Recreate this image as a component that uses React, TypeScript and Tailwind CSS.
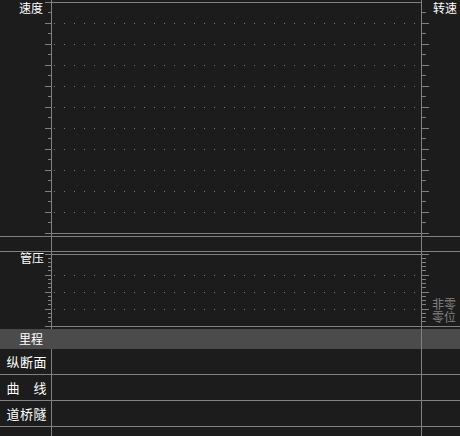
import React from "react";

const LINE = "#808080";
const DOT = "#787878";

// x positions of the grid dots, shared by both panels
const dotXs = Array.from({ length: 37 }, (_, i) => 54 + i * 10);

const ChartGrid = () => {
  const rects: React.ReactNode[] = [];
  const r = (x: number, y: number, w: number, h: number, fill = LINE) =>
    rects.push(<rect key={rects.length} x={x} y={y} width={w} height={h} fill={fill} />);

  // axes
  r(51, 0, 1, 329);
  r(51, 349, 1, 87);
  r(421, 0, 1, 436);

  // speed panel
  r(45, 2, 377, 1);
  r(45, 233, 384, 1);
  for (let k = 0; k < 11; k++) {
    const y = 12 + k * 21;
    r(48, y, 4, 1);
    r(421, y, 5, 1);
  }
  for (let k = 0; k < 10; k++) {
    const y = 23 + k * 21;
    r(45, y, 7, 1);
    r(421, y, 8, 1);
    dotXs.forEach((x) => r(x, y, 1, 1, DOT));
  }

  // separators
  r(0, 236, 460, 1);
  r(0, 251, 460, 1);

  // pipe pressure panel
  r(45, 254, 384, 1);
  for (let j = 0; j < 4; j++) {
    const base = 258 + j * 17;
    if (j > 0) {
      r(45, base, 7, 1);
      r(421, base, 8, 1);
      dotXs.forEach((x) => r(x, base, 1, 1, DOT));
    } else {
      r(48, base, 4, 1);
      r(421, base, 5, 1);
    }
    [4, 8, 12].forEach((o) => {
      r(48, base + o, 4, 1);
      r(421, base + o, 5, 1);
    });
  }
  r(45, 326, 415, 1);

  return (
    <svg
      className="absolute inset-0 pointer-events-none"
      width={460}
      height={436}
      shapeRendering="crispEdges"
    >
      {rects}
    </svg>
  );
};

const rows = ["纵断面", "曲　线", "道桥隧"];

export default function App() {
  return (
    <div className="relative w-[460px] h-[436px] overflow-hidden bg-[#1c1c1c] text-white font-['Noto_Sans_CJK_SC','Liberation_Sans',sans-serif]">
      <div className="flex flex-col">
        {/* speed panel */}
        <div className="grid grid-cols-[51px_1fr_39px] h-[236px]">
          <span className="text-right pr-[8px] pt-[2px] text-[12px] leading-[12px]">速度</span>
          <div />
          <span className="pl-[12px] pt-[2px] text-[12px] leading-[12px]">转速</span>
        </div>

        <div className="h-[15px]" />

        {/* pipe pressure panel */}
        <div className="grid grid-cols-[51px_1fr_39px] h-[75px]">
          <span className="text-right pr-[7px] pt-[1px] text-[12px] leading-[12px]">管压</span>
          <div />
          <div className="flex flex-col justify-end pl-[11px] pb-[3px]">
            <span className="w-[25px] break-all text-[12px] leading-[13px] text-[#808080]">非零零位</span>
          </div>
        </div>

        <div className="h-[3px]" />

        {/* mileage band */}
        <div className="h-[20px] bg-[#4b4b4b] flex items-center">
          <span className="w-[51px] text-right pr-[8px] text-[12px] leading-[12px]">里程</span>
        </div>

        {rows.map((label) => (
          <div key={label} className="h-[26px] border-b border-[#808080] flex items-center">
            <span className="w-[51px] text-right pr-[4px] text-[13px] leading-[13px] tracking-[0.5px]">
              {label}
            </span>
          </div>
        ))}
      </div>

      <ChartGrid />
    </div>
  );
}
